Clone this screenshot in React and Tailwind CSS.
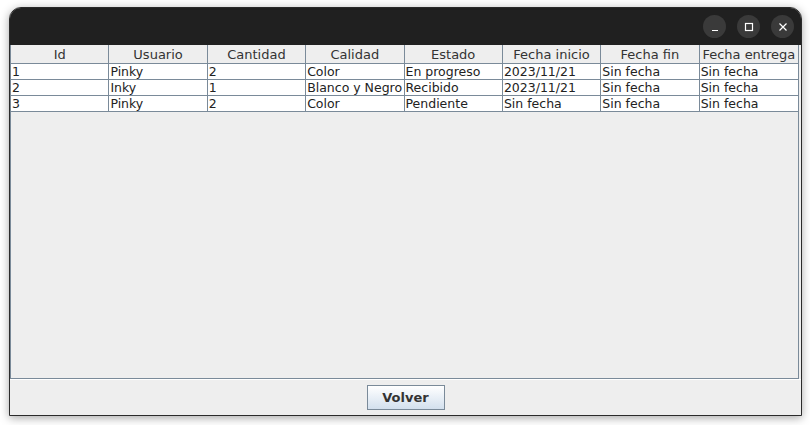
import React from "react";

const cols = ["Id", "Usuario", "Cantidad", "Calidad", "Estado", "Fecha inicio", "Fecha fin", "Fecha entrega"];
const rows = [
  ["1", "Pinky", "2", "Color", "En progreso", "2023/11/21", "Sin fecha", "Sin fecha"],
  ["2", "Inky", "1", "Blanco y Negro", "Recibido", "2023/11/21", "Sin fecha", "Sin fecha"],
  ["3", "Pinky", "2", "Color", "Pendiente", "Sin fecha", "Sin fecha", "Sin fecha"],
];

function TitleButton({ children }) {
  return (
    <div className="w-[23px] h-[23px] rounded-full bg-[#3a3a3a] flex items-center justify-center text-white">
      {children}
    </div>
  );
}

export default function App() {
  return (
    <div className="w-[810px] h-[425px] bg-white pt-[7px] pl-[9px]" style={{ fontFamily: "'DejaVu Sans', sans-serif" }}>
      <div className="w-[793px] h-[409px] flex flex-col rounded-t-[12px] overflow-hidden shadow-[0_2px_10px_rgba(0,0,0,0.35)] border border-[#2b2b2b] bg-[#eeeeee]">
        {/* title bar */}
        <div className="h-[37px] bg-[#202020] flex items-center justify-end gap-[11px] pr-[7px] shrink-0">
          <TitleButton>
            <svg width="10" height="10" viewBox="0 0 10 10"><path d="M2 8.5h6" stroke="white" strokeWidth="1.2" /></svg>
          </TitleButton>
          <TitleButton>
            <svg width="10" height="10" viewBox="0 0 10 10"><rect x="1.5" y="1.5" width="7" height="7" fill="none" stroke="white" strokeWidth="1.2" /></svg>
          </TitleButton>
          <TitleButton>
            <svg width="10" height="10" viewBox="0 0 10 10"><path d="M1.5 1.5l7 7M8.5 1.5l-7 7" stroke="white" strokeWidth="1.2" /></svg>
          </TitleButton>
        </div>

        {/* scroll pane */}
        <div className="flex-1 border-l border-r border-b border-[#7a8a99] mr-[2px] bg-[#eeeeee]">
          <div className="grid grid-cols-8 text-[#333333]">
            {cols.map((c, i) => (
              <div
                key={c}
                className={`h-[19px] flex items-center justify-center text-[13px] bg-[#eeeeee] border-b border-[#7a8a99] ${i < 7 ? "border-r" : ""} whitespace-nowrap overflow-hidden leading-none`}
              >
                {c}
              </div>
            ))}
            {rows.map((r, ri) =>
              r.map((v, i) => (
                <div
                  key={ri + "-" + i}
                  className={`h-[16px] flex items-center pl-[1px] pt-[1px] text-[12.5px] bg-white text-[#222222] border-b border-[#7a8a99] ${i < 7 ? "border-r" : ""} whitespace-nowrap overflow-hidden leading-none`}
                >
                  {v}
                </div>
              ))
            )}
          </div>
        </div>

        {/* bottom panel */}
        <div className="h-[36px] shrink-0 border-t border-white flex items-center justify-center">
          <button className="w-[78px] h-[25px] border border-[#7a8a99] bg-gradient-to-b from-white to-[#d3e0ee] text-[13px] font-bold text-[#333333]">
            Volver
          </button>
        </div>
      </div>
    </div>
  );
}
